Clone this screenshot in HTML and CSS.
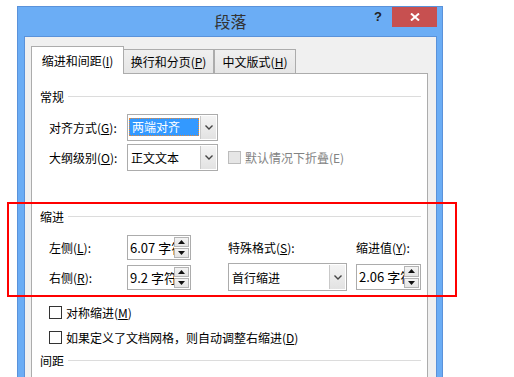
FILE: index.html
```html
<!DOCTYPE html>
<html lang="zh-CN">
<head>
    <meta charset="UTF-8">
    <title>段落</title>
    <link rel="stylesheet" href="styles.css">
</head>
<body>

<div class="window">
    <div class="titlebar">
        <div></div>
        <div class="title">段落</div>
        <div class="caption-buttons">
            <span class="help">?</span>
            <span class="close">
                <svg width="10" height="8" viewBox="0 0 10 8"><path d="M1 0.5 L9 7.5 M9 0.5 L1 7.5" stroke="#fff" stroke-width="2"/></svg>
            </span>
        </div>
    </div>

    <div class="client">
        <div class="tabs">
            <div class="tab tab-1 active"><span>缩进和间距(<u>I</u>)</span></div>
            <div class="tab tab-2"><span>换行和分页(<u>P</u>)</span></div>
            <div class="tab tab-3"><span>中文版式(<u>H</u>)</span></div>
        </div>

        <div class="panel">
            <div class="group-title">常规</div>

            <div class="form-row">
                <span class="label">对齐方式(<u>G</u>):</span>
                <div class="combo combo-small">
                    <div class="combo-text"><span class="selected">两端对齐</span></div>
                    <div class="combo-btn"><svg width="8" height="5" viewBox="0 0 8 5"><path d="M0.5 0.5 L4 4 L7.5 0.5" fill="none" stroke="#444" stroke-width="1.4"/></svg></div>
                </div>
            </div>
            <div class="form-row">
                <span class="label">大纲级别(<u>O</u>):</span>
                <div class="combo combo-small">
                    <div class="combo-text plain">正文文本</div>
                    <div class="combo-btn"><svg width="8" height="5" viewBox="0 0 8 5"><path d="M0.5 0.5 L4 4 L7.5 0.5" fill="none" stroke="#444" stroke-width="1.4"/></svg></div>
                </div>
                <span class="check disabled"><span class="box"></span><span>默认情况下折叠(E)</span></span>
            </div>

            <div class="group-title group-gap">缩进</div>

            <div class="indent-grid">
                <span class="label">左侧(<u>L</u>):</span>
                <div class="spin">
                    <div class="spin-text">6.07 字符</div>
                    <div class="spin-btns">
                        <span class="spin-btn"><svg width="7" height="4" viewBox="0 0 7 4"><path d="M0 4 L3.5 0 L7 4 Z" fill="#111"/></svg></span>
                        <span class="spin-btn"><svg width="7" height="4" viewBox="0 0 7 4"><path d="M0 0 L3.5 4 L7 0 Z" fill="#111"/></svg></span>
                    </div>
                </div>
                <span class="label">特殊格式(<u>S</u>):</span>
                <span class="label">缩进值(<u>Y</u>):</span>

                <span class="label">右侧(<u>R</u>):</span>
                <div class="spin">
                    <div class="spin-text">9.2 字符</div>
                    <div class="spin-btns">
                        <span class="spin-btn"><svg width="7" height="4" viewBox="0 0 7 4"><path d="M0 4 L3.5 0 L7 4 Z" fill="#111"/></svg></span>
                        <span class="spin-btn"><svg width="7" height="4" viewBox="0 0 7 4"><path d="M0 0 L3.5 4 L7 0 Z" fill="#111"/></svg></span>
                    </div>
                </div>
                <div class="combo combo-wide">
                    <div class="combo-text plain">首行缩进</div>
                    <div class="combo-btn"><svg width="8" height="5" viewBox="0 0 8 5"><path d="M0.5 0.5 L4 4 L7.5 0.5" fill="none" stroke="#444" stroke-width="1.4"/></svg></div>
                </div>
                <div class="spin spin-value">
                    <div class="spin-text">2.06 字符</div>
                    <div class="spin-btns">
                        <span class="spin-btn"><svg width="7" height="4" viewBox="0 0 7 4"><path d="M0 4 L3.5 0 L7 4 Z" fill="#111"/></svg></span>
                        <span class="spin-btn"><svg width="7" height="4" viewBox="0 0 7 4"><path d="M0 0 L3.5 4 L7 0 Z" fill="#111"/></svg></span>
                    </div>
                </div>
            </div>

            <div class="checks">
                <span class="check"><span class="box"></span><span>对称缩进(<u>M</u>)</span></span>
                <span class="check"><span class="box"></span><span>如果定义了文档网格，则自动调整右缩进(<u>D</u>)</span></span>
            </div>

            <div class="group-title">间距</div>
        </div>
    </div>
</div>

<div class="annotation"></div>

</body>
</html>
```

FILE: styles.css
```css
html, body {
    overflow: hidden;
}
body {
    margin: 0;
    background: #fff;
    font-family: "Noto Sans CJK SC", "Noto Sans", sans-serif;
    font-size: 12px;
    color: #000;
}
u {
    text-underline-offset: 1px;
}

/* window frame */
.window {
    width: 426px;
    height: 400px;
    margin: 6px 0 0 17px;
    box-sizing: border-box;
    border: 1px solid #5a92da;
    background: #6badf5;
    padding: 0 5px 0 6px;
}
.titlebar {
    height: 29px;
    display: grid;
    grid-template-columns: 1fr auto 1fr;
}
.title {
    font-size: 16px;
    line-height: 29px;
    color: #333;
}
.caption-buttons {
    display: flex;
    justify-content: flex-end;
    align-items: flex-start;
}
.help {
    width: 28px;
    height: 20px;
    line-height: 20px;
    text-align: center;
    font-family: "Liberation Sans", sans-serif;
    font-weight: bold;
    font-size: 13px;
    color: #222;
}
.close {
    width: 45px;
    height: 20px;
    background: #c75050;
    display: flex;
    align-items: center;
    justify-content: center;
}

.client {
    height: 400px;
    border: 1px solid #5a92da;
    background: #f0f0f0;
    padding: 9px 8px 0 6px;
}

/* tabs */
.tabs {
    display: flex;
    align-items: flex-end;
    height: 27px;
}
.tab {
    box-sizing: border-box;
    height: 24px;
    border: 1px solid #acacac;
    border-bottom: none;
    background: linear-gradient(#f0f0f0, #e5e5e5);
    display: flex;
    align-items: center;
    justify-content: center;
    white-space: nowrap;
}
.tab.active {
    height: 28px;
    margin-bottom: -1px;
    background: #fff;
    position: relative;
    z-index: 1;
}
.tab-1 {
    width: 93px;
}
.tab-2 {
    width: 91px;
    margin-left: -1px;
}
.tab-3 {
    width: 82px;
}

.panel {
    height: 400px;
    border: 1px solid #acacac;
    background: #fff;
    padding: 12px 6px 0 8px;
}
.group-title {
    display: flex;
    align-items: center;
    gap: 4px;
    height: 20px;
}
.group-title::after {
    content: "";
    flex: 1;
    height: 1px;
    background: #dcdcdc;
}
.group-gap {
    margin-top: 34px;
}

.form-row {
    display: flex;
    align-items: center;
    height: 30px;
    margin-left: 9px;
}
.group-title + .form-row {
    margin-top: 6px;
}
.label {
    width: 78px;
    white-space: nowrap;
}

/* combo boxes */
.combo {
    box-sizing: border-box;
    height: 27px;
    border: 1px solid #acacac;
    padding: 1px;
    display: flex;
    background: #fff;
}
.combo-small {
    width: 91px;
}
.combo-wide {
    width: 119px;
    height: 28px;
}
.combo-text {
    flex: 1;
    display: flex;
    align-items: center;
    white-space: nowrap;
}
.combo-text.plain {
    padding-left: 2px;
}
.selected {
    flex: 1;
    height: 16px;
    line-height: 16px;
    padding-left: 2px;
    margin-right: 1px;
    background: #3399ff;
    color: #fff;
    border: 1px dotted #e4883a;
}
.combo-btn {
    width: 15px;
    border-left: 1px solid #c9c9c9;
    background: linear-gradient(#f4f4f4, #e2e2e2);
    display: flex;
    align-items: center;
    justify-content: center;
}

/* checkboxes */
.check {
    display: flex;
    align-items: center;
    gap: 4px;
    white-space: nowrap;
}
.box {
    width: 13px;
    height: 13px;
    box-sizing: border-box;
    border: 1px solid #333;
    background: #fff;
}
.check.disabled {
    margin-left: 10px;
    color: #838383;
}
.check.disabled .box {
    border-color: #bcbcbc;
    background: #e6e6e6;
}
.checks {
    margin: 8px 0 0 9px;
    display: grid;
    grid-auto-rows: 25px;
}

/* indent block */
.indent-grid {
    margin: 6px 0 0 9px;
    display: grid;
    grid-template-columns: 78px 101px 128px 65px;
    grid-auto-rows: 30px;
    align-items: center;
}
.spin {
    box-sizing: border-box;
    width: 64px;
    height: 25px;
    border: 1px solid #acacac;
    display: flex;
    background: #fff;
}
.spin-value {
    width: 65px;
    height: 26px;
}
.spin-text {
    flex: 1;
    overflow: hidden;
    white-space: nowrap;
    line-height: 23px;
    padding-left: 2px;
    font-size: 13px;
}
.spin-btns {
    width: 15px;
    display: flex;
    flex-direction: column;
    padding: 1px 1px 1px 0;
    gap: 1px;
}
.spin-btn {
    flex: 1;
    box-sizing: border-box;
    border: 1px solid #b4b4b4;
    background: linear-gradient(#f4f4f4, #e4e4e4);
    display: flex;
    align-items: center;
    justify-content: center;
}

/* red marker drawn over the screenshot */
.annotation {
    position: absolute;
    left: 7px;
    top: 202px;
    width: 450px;
    height: 95px;
    box-sizing: border-box;
    border: 2px solid #f00;
}
```
